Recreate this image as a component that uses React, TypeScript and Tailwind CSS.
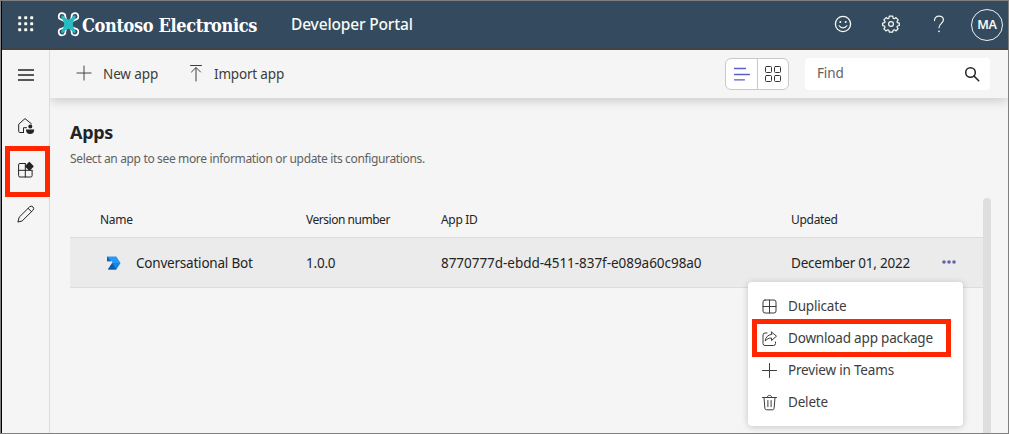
import type { ReactNode } from "react";

type IconProps = { className?: string; children: ReactNode; box?: string };

function Icon({ className = "", children, box = "0 0 18 18" }: IconProps) {
  return (
    <svg viewBox={box} className={`block shrink-0 ${className}`} fill="none" stroke="currentColor" strokeWidth="1" strokeLinecap="round" strokeLinejoin="round">
      {children}
    </svg>
  );
}

function DroneLogo() {
  return (
    <svg viewBox="0 0 23 25" className="block h-[25px] w-[23px] shrink-0" fill="none">
      <g stroke="#fff" strokeWidth="1.7" strokeLinecap="round">
        <path d="M4.6 7.7A3.3 3.3 0 1 1 8.3 4.8L9 6.8M4.6 7.7 7 9" />
        <path d="M18.4 7.7A3.3 3.3 0 1 0 14.7 4.8L14 6.8M18.4 7.7 16 9" />
        <path d="M4.6 16.7A3.3 3.3 0 1 0 8.3 19.6L9 17.6M4.6 16.7 7 15.4" />
        <path d="M18.4 16.7A3.3 3.3 0 1 1 14.7 19.6L14 17.6M18.4 16.7 16 15.4" />
      </g>
      <path d="M5.6 3.8Q9.3 8 11.5 8T17.4 3.8L18.2 4.6Q15.2 9.8 15.2 12.2T18.2 19.8L17.4 20.6Q13.7 16.4 11.5 16.4T5.6 20.6L4.8 19.8Q7.8 14.6 7.8 12.2T4.8 4.6Z" fill="#27bcc2" stroke="#27bcc2" strokeWidth="1.2" strokeLinejoin="round" />
    </svg>
  );
}

function Header() {
  return (
    <header className="flex h-[49px] shrink-0 items-center border-b-2 border-[#444] bg-[#344a5f] text-white">
      <svg viewBox="0 0 16 16" className="-mt-0.5 ml-4 block h-4 w-4" fill="#fafff5">
        {[0, 6, 12].map((y) => [0, 6, 12].map((x) => <rect key={`${x}-${y}`} x={x + 0.2} y={y + 0.2} width="3" height="3" rx=".7" />))}
      </svg>
      <div className="ml-[23px] flex items-center">
        <DroneLogo />
        <span className="ml-[2px] w-[178px] whitespace-nowrap pt-0.5 font-['DejaVu_Serif_Condensed','DejaVu_Serif',serif] text-[18px] leading-6 font-bold tracking-[-0.35px]">Contoso Electronics</span>
      </div>
      <span className="ml-[31px] whitespace-nowrap text-[15.5px] font-medium tracking-[-0.15px] text-[#f7fbf5]">Developer Portal</span>
      <div className="ml-auto flex items-center text-[#f5faf2]">
        <Icon className="-mt-0.5 h-[18px] w-[18px]">
          <circle cx="9" cy="9" r="7.6" strokeWidth="1.3" />
          <circle cx="6.3" cy="7" r="1" fill="currentColor" stroke="none" />
          <circle cx="11.7" cy="7" r="1" fill="currentColor" stroke="none" />
          <path d="M5.2 10.8C6.8 13.5 11.2 13.5 12.8 10.8" strokeWidth="1.2" />
        </Icon>
        <Icon className="-mt-0.5 ml-[30px] h-[18px] w-[18px]">
          <path d="M7.3 1.2h3.4l.4 2 1 .5 1.9-1.1 2.2 2.3-1.2 1.7.4 1.1 1.9.4v2.4l-1.9.5-.4 1 1.1 1.8-2 2.1-1.9-1.1-1.1.5-.4 1.9H7.3l-.4-1.9-1-.5L4 15.9l-2.1-2 1.1-1.8-.4-1.1-1.9-.4V8.2l1.9-.5.5-1L1.9 4.9l2.2-2.3L5.9 3.7l1-.5z" strokeWidth="1.25" />
          <circle cx="9" cy="9" r="2.4" strokeWidth="1.2" />
        </Icon>
        <Icon className="-mt-0.5 ml-[30px] h-[18px] w-[18px]">
          <path d="M4.5 5.6C4.5 2.8 6.3 1.2 9 1.2s4.4 1.5 4.4 3.9c0 3-4.4 3.8-4.4 7.6" strokeWidth="1.2" />
          <circle cx="9" cy="16.3" r=".9" fill="currentColor" stroke="none" />
        </Icon>
        <div className="mr-[5px] ml-[23px] flex h-8 w-8 items-center justify-center rounded-full border border-[#eef3ef] pt-0.5 text-[12.5px] font-semibold tracking-[-0.3px]">MA</div>
      </div>
    </header>
  );
}

function Sidebar() {
  return (
    <nav className="relative flex w-[48px] shrink-0 flex-col items-center border-r border-[#dcdcdc] bg-[#f5f5f5] text-[#242424]">
      <Icon className="mt-4 h-[18px] w-[18px]">
        <path d="M1 4h16M1 9h16M1 14h16" strokeWidth="1.4" strokeLinecap="butt" />
      </Icon>
      <Icon className="mt-[33px] h-[18px] w-[18px]">
        <path d="M6.5 15.5H2.7a1 1 0 0 1-1-1V7.2L8 1.6l6.4 5.2M6.5 15.5v-4.8h3" />
        <circle cx="13.3" cy="9.6" r="2" fill="currentColor" stroke="none" />
        <path d="M9 12.5h8.2c0 3-1.5 4.5-4.1 4.5S9 15.5 9 12.5Z" fill="currentColor" stroke="none" />
      </Icon>
      <Icon className="mt-[26px] h-[18px] w-[18px]">
        <path d="M8.2 2.5H3a1.4 1.4 0 0 0-1.4 1.4v10.7A1.4 1.4 0 0 0 3 16h10.7a1.4 1.4 0 0 0 1.4-1.4V9.4M8.3 2.5V16M1.6 9.3h13.3" />
        <path d="m12.3 1.8 3.4 3.6-3.2 3.3L9 5.4Z" fill="currentColor" strokeWidth="1.8" />
      </Icon>
      <Icon className="mt-[26px] h-[18px] w-[18px]">
        <path d="M1 16.7 2.2 12.2 12.5 1.9a2.4 2.4 0 0 1 3.4 3.4L5.5 15.6ZM11.1 3.3 14.5 6.7" />
      </Icon>
      <div className="absolute top-24 left-[3px] h-[51px] w-[45px] border-5 border-[#ff2600]" />
    </nav>
  );
}

function Toolbar() {
  return (
    <div className="relative flex h-12 shrink-0 items-center bg-[#f5f5f5] pr-[18px] pl-[26px] text-[13.5px] text-[#3c3c3c] shadow-[0_2px_11px_rgba(0,0,0,0.2)]">
      <Icon className="-mt-0.5 h-[17px] w-[17px]"><path d="M1 8.5h15M8.5 1v15" /></Icon>
      <span className="mt-px ml-[10px] w-[75px] whitespace-nowrap tracking-[-0.12px]">New app</span>
      <Icon className="-mt-0.5 ml-[9px] h-[18px] w-[18px]"><path d="M3.5 1.5h11M9 17V4M4.5 8 9 3.5 13.5 8" /></Icon>
      <span className="mt-px ml-[9px] whitespace-nowrap tracking-[-0.18px]">Import app</span>
      <div className="ml-auto flex h-8 w-16 rounded-[6px] border border-[#c9c9c9] bg-white">
        <div className="flex w-[32px] items-center justify-center border-r border-[#c9c9c9] text-[#5b5fc7]">
          <Icon className="h-[16px] w-[16px]" box="0 0 16 16"><path d="M.5 2.5h11M.5 8.5h15M.5 13.8h10" strokeWidth="1.3" /></Icon>
        </div>
        <div className="flex flex-1 items-center justify-center text-[#333]">
          <Icon className="h-[18px] w-[18px]">
            <rect x="1.5" y="1.5" width="6" height="6" rx="1" />
            <rect x="10.5" y="1.5" width="6" height="6" rx="1" />
            <rect x="1.5" y="10.5" width="6" height="6" rx="1" />
            <rect x="10.5" y="10.5" width="6" height="6" rx="1" />
          </Icon>
        </div>
      </div>
      <div className="ml-4 flex h-8 w-[185px] items-center justify-between rounded bg-white pr-[10px] pl-3 text-[#616161]">
        <span className="-mt-px tracking-[-0.15px]">Find</span>
        <Icon className="h-4 w-4 text-[#242424]" box="0 0 16 16">
          <circle cx="6.5" cy="6.5" r="4.8" strokeWidth="1.5" /><path d="m10 10 4.7 4.7" strokeWidth="1.6" />
        </Icon>
      </div>
    </div>
  );
}

const columns = "grid grid-cols-[206px_135px_350px_1fr] items-center pl-[30px]";

function AppsTable() {
  return (
    <div className="mt-[31px] flex min-h-0 flex-1">
      <div className="w-[913px] text-[#242424]">
        <div className={`${columns} h-[39px] pt-[4px] text-[12px] tracking-[-0.3px]`}>
          <span>Name</span><span className="tracking-[-0.47px]">Version number</span><span>App ID</span><span>Updated</span>
        </div>
        <div className={`${columns} h-[51px] border-y border-[#dddddd] bg-[#ebebeb] text-[13.5px] tracking-[-0.21px]`}>
          <div className="flex items-center whitespace-nowrap">
            <svg viewBox="0 0 15 14" className="ml-[7px] block h-[14px] w-[14px]">
              <path d="M0 0h10l4.5 7H5.5V5H0Z" fill="#2898f2" />
              <path d="M0 0 4.5 5H0Z" fill="#0f62b5" />
              <path d="M5.5 7h9L10 14H1Z" fill="#1b84df" />
              <path d="m5.5 7 4.5 7H1Z" fill="#0d5eaf" />
            </svg>
            <span className="ml-[15px] pt-0.5">Conversational Bot</span>
          </div>
          <span className="pt-0.5">1.0.0</span>
          <span className="pt-0.5 whitespace-nowrap tracking-[-0.04px]">8770777d-ebdd-4511-837f-e089a60c98a0</span>
          <div className="flex items-center whitespace-nowrap">
            <span className="w-[151px] pt-0.5">December 01, 2022</span>
            <svg viewBox="0 0 14 4" className="-mt-0.5 block h-1 w-[14px]" fill="#6264a7"><circle cx="2" cy="2" r="1.8" /><circle cx="7" cy="2" r="1.8" /><circle cx="12" cy="2" r="1.8" /></svg>
          </div>
        </div>
      </div>
      <div className="w-2 rounded-t-full bg-[#dedede]" />
    </div>
  );
}

const actions: { label: string; icon: ReactNode }[] = [
  { label: "Duplicate", icon: <path d="M4 2h9a2 2 0 0 1 2 2v9a2 2 0 0 1-2 2H4a2 2 0 0 1-2-2V4a2 2 0 0 1 2-2ZM8.5 2v13M2 8.5h13" /> },
  { label: "Download app package", icon: <path d="M6 3H4a2 2 0 0 0-2 2v8.5a2 2 0 0 0 2 2h8.5a2 2 0 0 0 2-2V12M10.5 2 15.5 6.2 10.5 10.5V8C7.7 8 6 9 4.2 11c.4-3.8 2.7-6.3 6.3-6.6Z" /> },
  { label: "Preview in Teams", icon: <path d="M1.5 8.5h14M8.5 1.5v14" /> },
  { label: "Delete", icon: <path d="M1.5 3.5h14M6.2 3.5c0-3 4.6-3 4.6 0M3 3.5l.9 10.8a1.6 1.6 0 0 0 1.6 1.5h6a1.6 1.6 0 0 0 1.6-1.5L14 3.5M6.9 6.5v6.2M10.1 6.5v6.2" /> },
];

function ActionMenu() {
  return (
    <div className="absolute top-[282px] left-[748px] w-[215px] rounded bg-white py-2 text-[13.5px] text-[#3d3d3d] shadow-[0_1px_7px_rgba(0,0,0,0.2)]">
      {actions.map(({ label, icon }) => (
        <div key={label} className="flex h-8 items-center pl-[13px]">
          <Icon className="mt-px h-[17px] w-[17px]" box="0 0 17 17">{icon}</Icon>
          <span className="mt-px ml-[10px] whitespace-nowrap tracking-[-0.18px]">{label}</span>
        </div>
      ))}
      <div className="absolute top-[37px] left-1 h-[38px] w-[199px] border-5 border-[#ff2600]" />
    </div>
  );
}

export default function App() {
  return (
    <div className="relative flex h-[434px] w-[1009px] overflow-hidden border border-[#808080] bg-[#f5f5f5] font-['Noto_Sans',sans-serif]">
      <div className="w-px shrink-0 bg-black" />
      <div className="flex min-w-0 flex-1 flex-col">
        <Header />
        <div className="flex min-h-0 flex-1">
          <Sidebar />
          <div className="flex min-w-0 flex-1 flex-col overflow-hidden">
            <Toolbar />
            <main className="flex min-h-0 flex-1 flex-col pl-5">
              <h1 className="mt-[22px] text-[18px] leading-6 font-bold tracking-[-0.3px] text-[#242424]">Apps</h1>
              <p className="mt-[7px] text-[12px] leading-4 tracking-[-0.35px] text-[#616161]">Select an app to see more information or update its configurations.</p>
              <AppsTable />
            </main>
          </div>
        </div>
      </div>
      <div className="absolute -top-px -left-px"><ActionMenu /></div>
    </div>
  );
}
